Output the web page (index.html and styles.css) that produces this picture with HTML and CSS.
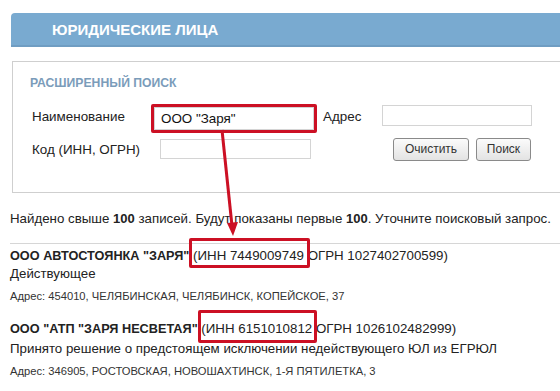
FILE: index.html
```html
<!DOCTYPE html>
<html lang="ru">
<head>
<meta charset="utf-8">
<title>Юридические лица</title>
<link rel="stylesheet" href="styles.css">
</head>
<body>
<div class="page">
  <div class="header">ЮРИДИЧЕСКИЕ ЛИЦА</div>
  <div class="panel">
    <div class="panel-title">РАСШИРЕННЫЙ ПОИСК</div>
    <div class="row row1">
      <span class="lbl lbl-name">Наименование</span>
      <span class="hl-wrap"><input class="inp inp-name" value='ООО "Заря"'></span>
      <span class="lbl lbl-addr">Адрес</span>
      <input class="inp inp-addr" value="">
    </div>
    <div class="row row2">
      <span class="lbl lbl-code">Код (ИНН, ОГРН)</span>
      <input class="inp inp-code" value="">
      <button class="btn btn-clear">Очистить</button>
      <button class="btn btn-search">Поиск</button>
    </div>
  </div>
  <div class="summary">Найдено свыше <b>100</b> записей. Будут показаны первые <b>100</b>. Уточните поисковый запрос.</div>
  <div class="results">
    <div class="item">
      <div class="title"><b>ООО АВТОСТОЯНКА "ЗАРЯ"</b> <span class="hl hl1">(ИНН 7449009749</span> ОГРН 1027402700599)</div>
      <div class="status">Действующее</div>
      <div class="addr">Адрес: 454010, ЧЕЛЯБИНСКАЯ, ЧЕЛЯБИНСК, КОПЕЙСКОЕ, 37</div>
    </div>
    <div class="item item2">
      <div class="title"><b>ООО "АТП "ЗАРЯ НЕСВЕТАЯ"</b> <span class="hl hl2">(ИНН 6151010812</span> ОГРН 1026102482999)</div>
      <div class="status status2">Принято решение о предстоящем исключении недействующего ЮЛ из ЕГРЮЛ</div>
      <div class="addr">Адрес: 346905, РОСТОВСКАЯ, НОВОШАХТИНСК, 1-Я ПЯТИЛЕТКА, 3</div>
    </div>
  </div>
  <svg class="arrow" width="560" height="391" viewBox="0 0 560 391">
    <line x1="222" y1="130" x2="232" y2="226" stroke="#cc1024" stroke-width="3"/>
    <polygon points="227,223 238,222 233,236" fill="#cc1024"/>
  </svg>
</div>
</body>
</html>
```

FILE: styles.css
```css
html, body {
  margin: 0;
  padding: 0;
  background: #ffffff;
  overflow: hidden;
}
body {
  width: 560px;
  height: 391px;
  font-family: "Liberation Sans", Arial, sans-serif;
  color: #222222;
}
.page {
  position: relative;
  width: 560px;
  height: 391px;
  padding-top: 13px;
  box-sizing: border-box;
  overflow: hidden;
}
.header {
  margin-left: 11px;
  width: 620px;
  height: 34px;
  box-sizing: border-box;
  background: #79aad0;
  border-bottom: 2px solid #6f9dc2;
  border-top-left-radius: 4px;
  color: #ffffff;
  font-weight: bold;
  font-size: 15px;
  line-height: 33px;
  padding-left: 41px;
}
.panel {
  margin-top: 14px;
  margin-left: 12px;
  width: 620px;
  height: 132px;
  box-sizing: border-box;
  border: 1px solid #cfcfcf;
  padding-top: 13px;
}
.panel-title {
  margin-left: 17px;
  font-size: 12.2px;
  font-weight: bold;
  color: #7b9cba;
  line-height: 16px;
}
.row {
  display: flex;
  align-items: center;
  padding-left: 19px;
}
.row1 {
  margin-top: 12px;
  height: 26px;
}
.row2 {
  margin-top: 8px;
  height: 24px;
}
.lbl {
  font-size: 13.4px;
  color: #222;
}
.lbl-name { width: 122px; }
.lbl-addr { width: 59px; margin-left: 9px; }
.lbl-code { width: 128px; }
.inp {
  box-sizing: border-box;
  border: 1px solid #d4d4d4;
  background: #fff;
  font-family: "Liberation Sans", Arial, sans-serif;
  font-size: 13.4px;
  color: #111;
  padding: 0 6px;
  margin: 0;
  outline: none;
}
.hl-wrap {
  position: relative;
  display: block;
  width: 160px;
  height: 23px;
  margin-top: 4px;
}
.hl-wrap::after {
  content: "";
  position: absolute;
  left: -3px;
  top: -3px;
  right: -3px;
  bottom: -3px;
  border: 3px solid #cc1024;
  border-radius: 2px;
}
.inp-name {
  width: 160px;
  height: 23px;
}
.inp-addr {
  width: 150px;
  height: 21px;
  margin-top: -2px;
}
.inp-code {
  width: 151px;
  height: 20px;
}
.btn {
  box-sizing: border-box;
  height: 23px;
  border: 1px solid #8a8a8a;
  border-radius: 3px;
  background: linear-gradient(#fbfbfb, #e3e3e3);
  font-family: "Liberation Sans", Arial, sans-serif;
  font-size: 12px;
  color: #333;
  padding: 0;
  margin: 0;
}
.btn-clear { width: 76px; margin-left: 82px; }
.btn-search { width: 55px; margin-left: 7px; }
.summary {
  margin-top: 18px;
  margin-left: 10px;
  font-size: 13.3px;
  line-height: 16px;
  white-space: nowrap;
}
.summary b {
  font-size: 13px;
}
.results {
  margin-top: 16px;
  margin-left: 10px;
  width: 560px;
  border-top: 1px solid #d6d6d6;
}
.item {
  padding-top: 4px;
}
.item2 {
  padding-top: 18px;
}
.title {
  font-size: 13.3px;
  line-height: 16px;
  white-space: nowrap;
}
.title b {
  font-size: 12.7px;
}
.hl {
  position: relative;
}
.hl::after {
  content: "";
  position: absolute;
  border: 3px solid #cc1024;
  border-radius: 2px;
}
.hl1::after {
  left: -4px;
  right: -6px;
  top: -10px;
  bottom: -5px;
}
.hl2::after {
  left: -3px;
  right: -5px;
  top: -11px;
  bottom: -7px;
}
.status {
  font-size: 13.3px;
  line-height: 16px;
  margin-top: 2px;
  white-space: nowrap;
}
.status2 {
  margin-top: 4px;
}
.addr {
  font-size: 11.2px;
  line-height: 13px;
  margin-top: 8px;
  color: #333;
  white-space: nowrap;
}
.arrow {
  position: absolute;
  left: 0;
  top: 0;
  pointer-events: none;
}
```
